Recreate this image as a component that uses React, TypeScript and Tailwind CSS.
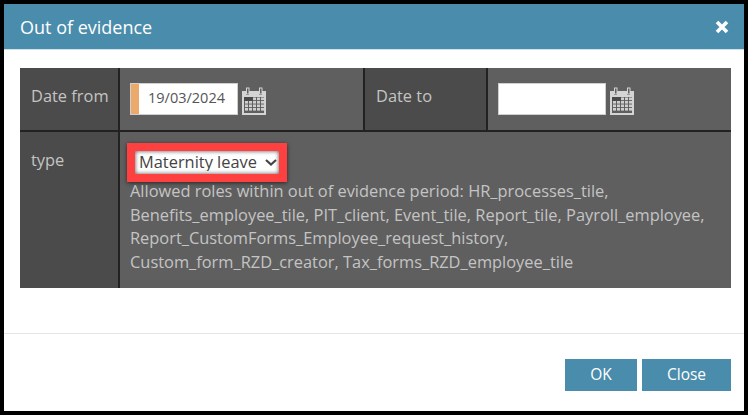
function CalendarIcon() {
  return (
    <svg width="24" height="28" viewBox="0 0 24 28" className="mt-1 block shrink-0">
      <path d="M0 4h4v4h3V4h10v4h3V4h4v24H0z" fill="#d4d4d4" />
      <rect x="4.5" y="1" width="2.5" height="6" fill="#5f5f5f" stroke="#d4d4d4" />
      <rect x="17.5" y="1" width="2.5" height="6" fill="#5f5f5f" stroke="#d4d4d4" />
      <rect x="2" y="10" width="20" height="16" fill="#5f5f5f" />
      <rect x="2" y="10" width="9" height="4" fill="#4a4a4a" />
      {[10.5, 14, 17.5, 21].map((y) =>
        [3, 7, 11, 15, 19].map((x) =>
          y === 10.5 && x < 11 ? null : (
            <rect key={`${x}-${y}`} x={x} y={y} width="3" height="2.6" fill="#cfcfcf" />
          ),
        ),
      )}
    </svg>
  );
}

export default function App() {
  return (
    <div className="flex h-[415px] w-[748px] flex-col border-4 border-black bg-white font-['Open_Sans',sans-serif]">
      <header className="flex h-[46px] shrink-0 items-center justify-between border-b border-[#cfe0e8] bg-[#4a8cab] pr-[15px] pl-4">
        <h1 className="text-[18px] leading-none text-white">Out of evidence</h1>
        <svg width="14" height="14" viewBox="0 0 14 14">
          <path d="M2 2l10 10M12 2L2 12" stroke="#fff" strokeWidth="3.6" />
        </svg>
      </header>

      <div className="h-[283px] shrink-0 px-4 pt-[18px]">
        <div className="grid w-[711px] grid-cols-[98px_2px_243px_2px_121px_2px_243px] grid-rows-[62px_2px_156px] bg-[#222] text-[16.4px] text-[#c4c4c4]">
          <div className="bg-[#4b4b4b] pt-4 pl-[11px]">Date from</div>
          <div />
          <div className="flex items-start gap-[4px] bg-[#5f5f5f] pt-[15px] pl-[10px]">
            <div className="flex h-8 w-[108px] border border-[#cfcfcf] bg-white text-[14.5px] text-[#555]">
              <div className="w-2 shrink-0 bg-[#eba96b]" />
              <span className="pt-[7px] pl-[9px] leading-none">19/03/2024</span>
            </div>
            <CalendarIcon />
          </div>
          <div />
          <div className="bg-[#4b4b4b] pt-4 pl-[11px]">Date to</div>
          <div />
          <div className="flex items-start gap-[4px] bg-[#5f5f5f] pt-[15px] pl-[10px]">
            <div className="h-8 w-[108px] border border-[#cfcfcf] bg-white" />
            <CalendarIcon />
          </div>

          <div className="col-span-7 h-[2px]" />

          <div className="bg-[#4b4b4b] pt-4 pl-[11px]">type</div>
          <div />
          <div className="col-span-5 bg-[#5f5f5f] pt-[11px] pl-[7px]">
            <div className="relative w-fit border-[8px] border-[#ff4040] shadow-[0_1px_4px_rgba(0,0,0,0.6)]">
              <select className="block h-[23px] w-[144px] appearance-none bg-white pl-1 text-[16.4px] leading-none text-[#444] shadow-[inset_0_0_4px_rgba(0,0,0,0.7)]">
                <option>Maternity leave</option>
              </select>
              <svg width="12" height="7" viewBox="0 0 12 7" className="pointer-events-none absolute top-[8px] right-[2px]">
                <path d="M1 1l5 4.5L11 1" fill="none" stroke="#444" strokeWidth="2.2" />
              </svg>
            </div>
            <p className="mt-[-3px] ml-[3px] w-[590px] leading-[23.7px]">
              Allowed roles within out of evidence period: HR_processes_tile, Benefits_employee_tile,
              PIT_client, Event_tile, Report_tile, Payroll_employee, Report_CustomForms_Employee_request_history,
              Custom_form_RZD_creator, Tax_forms_RZD_employee_tile
            </p>
          </div>
        </div>
      </div>

      <footer className="flex flex-1 justify-end gap-[5px] border-t border-[#e5e5e5] pt-[25px] pr-[13px]">
        <button className="h-8 w-[72px] bg-[#4a8cab] text-[15.5px] text-white">OK</button>
        <button className="h-8 w-[89px] bg-[#4a8cab] text-[15.5px] text-white">Close</button>
      </footer>
    </div>
  );
}
